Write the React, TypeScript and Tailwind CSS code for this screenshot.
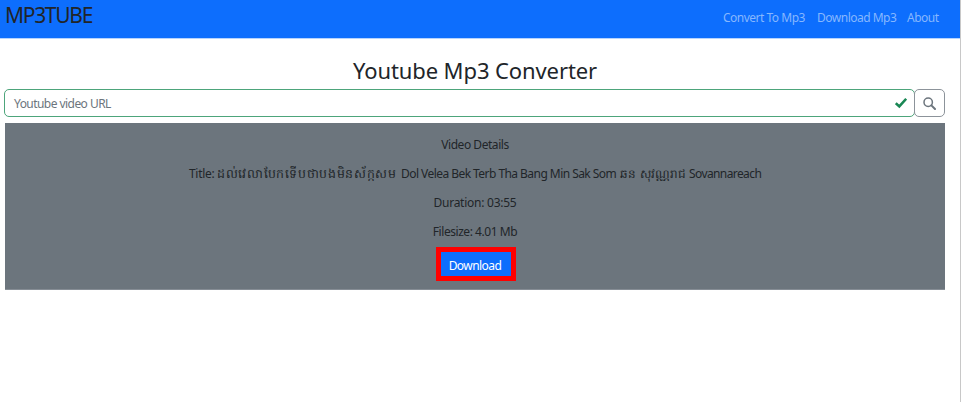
const links = [
  { label: "Convert To Mp3", width: "w-[82px]" },
  { label: "Download Mp3", width: "w-[78px]" },
  { label: "About", width: "w-[32px]" },
];

function Navbar() {
  return (
    <nav className="flex h-[38px] items-start justify-between bg-[#0d6efd] pl-[5px] pr-[21px] shadow-[0_1px_0_#b6d4fe]">
      <a className="mt-[1px] whitespace-nowrap text-[21px] leading-[29px] tracking-[-1.3px] text-[#212529]">MP3TUBE</a>
      <ul className="mt-[9px] flex gap-[12px] text-[12px] leading-[18px] tracking-[-0.5px] text-[#86b7fe]">
        {links.map((l) => (
          <li key={l.label} className={`${l.width} whitespace-nowrap`}>{l.label}</li>
        ))}
      </ul>
    </nav>
  );
}

function SearchBar() {
  return (
    <div className="flex h-[28px]">
      <div className="flex w-[911px] items-center justify-between rounded-[5px] border border-[#4da57b] bg-white pl-[9px] pr-[7px]">
        <span className="mt-[2px] text-[12px] leading-[18px] tracking-[-0.55px] text-[#6c757d]">Youtube video URL</span>
        <svg className="h-[12px] w-[12px] text-[#198754]" viewBox="0 0 12 12" fill="none" stroke="currentColor" strokeWidth="2.6">
          <path d="M0.8 6.2 4.3 9.4 11.2 1.8" />
        </svg>
      </div>
      <button className="-ml-px flex w-[31px] items-center justify-center rounded-[5px] border border-[#8c939a] bg-white text-[#6c757d]">
        <svg className="mt-px h-[13px] w-[13px]" viewBox="0 0 13 13" fill="none" stroke="currentColor">
          <circle cx="5.2" cy="5.2" r="4.2" strokeWidth="1.5" />
          <path d="M8.4 8.4 12 12" strokeWidth="2" strokeLinecap="round" />
        </svg>
      </button>
    </div>
  );
}

function VideoDetails() {
  return (
    <section className="ml-px mt-[6px] flex h-[167px] w-[940px] flex-col items-center border-b border-[#868d95] bg-[#6c757d] pt-[13px] text-[12px] leading-[18px] tracking-[-0.55px] text-[#212529]">
      <p className="tracking-[-0.45px]">Video Details</p>
      <p className="mt-[11px] flex w-[572px] whitespace-nowrap">
        <span className="w-[28px] tracking-[-0.3px]">Title:</span>
        <span className="w-[184px] text-[12.5px] tracking-[0.7px]">ដល់វេលាបែកទើបថាបងមិនស័ក្កសម</span>
        <span className="w-[219px]">Dol Velea Bek Terb Tha Bang Min Sak Som</span>
        <span className="w-[69px] tracking-[0.15px]">ឆន សុវណ្ណរាជ</span>
        <span className="w-[72px] tracking-[-0.6px]">Sovannareach</span>
      </p>
      <p className="mt-[11px] tracking-[-0.25px]">Duration: 03:55</p>
      <p className="mt-[11px] tracking-[-0.45px]">Filesize: 4.01 Mb</p>
      <button className="ml-[2px] mt-[6px] flex h-[34px] w-[80px] items-center justify-center border-5 border-[#ff0000] bg-[#0d6efd] pr-[2px] pt-[3px] tracking-[-0.55px] text-white">
        Download
      </button>
    </section>
  );
}

export default function App() {
  return (
    <div className="h-[402px] w-[961px] overflow-hidden border-r border-[#c8c8c8] bg-white font-['Noto_Sans','DejaVu_Sans',sans-serif]">
      <Navbar />
      <main className="pl-[4px]">
        <h1 className="mt-[16px] h-[35px] w-[942px] text-center text-[22px] leading-[32px] tracking-[-0.1px] text-[#212529]">Youtube Mp3 Converter</h1>
        <SearchBar />
        <VideoDetails />
      </main>
    </div>
  );
}
